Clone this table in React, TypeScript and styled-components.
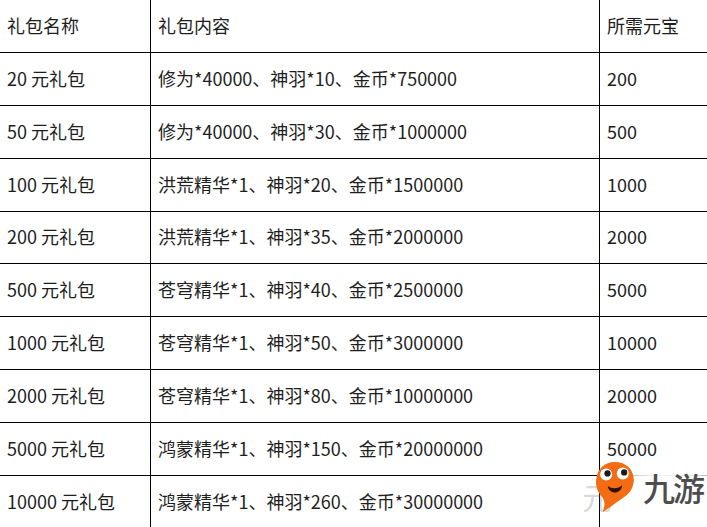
import React from "react";
import styled, { createGlobalStyle } from "styled-components";

const Global = createGlobalStyle`
  html, body { margin: 0; padding: 0; background: #fff; }
  body { width: 707px; height: 527px; overflow: hidden; }
`;

const Page = styled.div`
  position: relative;
  width: 707px;
  height: 527px;
  overflow: hidden;
  background: #fff;
  font-family: "Noto Sans CJK SC", "Noto Sans", sans-serif;
  color: #1e1e1e;
`;

const Table = styled.div`
  display: grid;
  grid-template-columns: 151px 449px 1fr;
  grid-auto-rows: 52.875px;
`;

const Cell = styled.div<{ $last?: boolean; $lastRow?: boolean }>`
  box-sizing: border-box;
  display: flex;
  align-items: center;
  padding-left: 7px;
  padding-bottom: 2px;
  font-size: 18px;
  line-height: 1;
  white-space: nowrap;
  border-right: ${(p) => (p.$last ? "none" : "1px solid #000")};
  border-bottom: ${(p) => (p.$lastRow ? "none" : "1px solid #000")};
`;

const Watermark = styled.div`
  position: absolute;
  left: 580px;
  top: 455px;
  width: 127px;
  height: 72px;
  display: flex;
  align-items: flex-start;
  gap: 7px;
  padding-left: 14px;
  padding-top: 6px;
  box-sizing: border-box;
`;

const Glow = styled.div`
  position: absolute;
  left: 28px;
  top: 8px;
  width: 110px;
  height: 70px;
  background: radial-gradient(ellipse at 55% 45%, rgba(255,255,255,0.95) 40%, rgba(255,255,255,0.6) 65%, rgba(255,255,255,0) 80%);
`;

const Ghost = styled.span`
  position: absolute;
  left: 2px;
  top: 26px;
  font-size: 30px;
  line-height: 1;
  color: rgba(120,120,120,0.3);
  font-family: "Noto Sans CJK SC", sans-serif;
`;

const Brand = styled.span`
  position: relative;
  font-size: 32px;
  line-height: 1;
  margin-top: 10px;
  color: #4d4d4d;
  font-family: "Noto Sans CJK SC", sans-serif;
  font-weight: 500;
  letter-spacing: -2px;
`;

const Mascot = styled.svg`
  position: relative;
  flex: none;
`;

const rows: [string, string, string][] = [
  ["礼包名称", "礼包内容", "所需元宝"],
  ["20 元礼包", "修为*40000、神羽*10、金币*750000", "200"],
  ["50 元礼包", "修为*40000、神羽*30、金币*1000000", "500"],
  ["100 元礼包", "洪荒精华*1、神羽*20、金币*1500000", "1000"],
  ["200 元礼包", "洪荒精华*1、神羽*35、金币*2000000", "2000"],
  ["500 元礼包", "苍穹精华*1、神羽*40、金币*2500000", "5000"],
  ["1000 元礼包", "苍穹精华*1、神羽*50、金币*3000000", "10000"],
  ["2000 元礼包", "苍穹精华*1、神羽*80、金币*10000000", "20000"],
  ["5000 元礼包", "鸿蒙精华*1、神羽*150、金币*20000000", "50000"],
  ["10000 元礼包", "鸿蒙精华*1、神羽*260、金币*30000000", ""],
];

export default function App() {
  return (
    <Page>
      <Global />
      <Table>
        {rows.map((r, i) =>
          r.map((c, j) => (
            <Cell key={`${i}-${j}`} $last={j === 2} $lastRow={i === rows.length - 1}>
              {c}
            </Cell>
          ))
        )}
      </Table>
      <Watermark>
        <Glow />
        <Ghost>元</Ghost>
        <Mascot width="42" height="52" viewBox="0 0 40 50">
          <path
            d="M20 1 C31 1 39 9 38 20 C37 30 30 34 24 38 C18 42 14 46 8 49 C10 44 11 40 8 35 C3 30 1 24 2 17 C3 8 10 1 20 1 Z"
            fill="#f36b12"
          />
          <circle cx="11.5" cy="13" r="5.8" fill="#fff" />
          <circle cx="27.5" cy="12" r="5.8" fill="#fff" />
          <circle cx="12.8" cy="12" r="3" fill="#1a1a1a" />
          <circle cx="28.8" cy="11" r="3" fill="#1a1a1a" />
          <path d="M13 24 C17 27 23 27 27 23 C26 29 22 31 18 30 C15 29 13.5 27 13 24 Z" fill="#2a1408" />
        </Mascot>
        <Brand>九游</Brand>
      </Watermark>
    </Page>
  );
}
